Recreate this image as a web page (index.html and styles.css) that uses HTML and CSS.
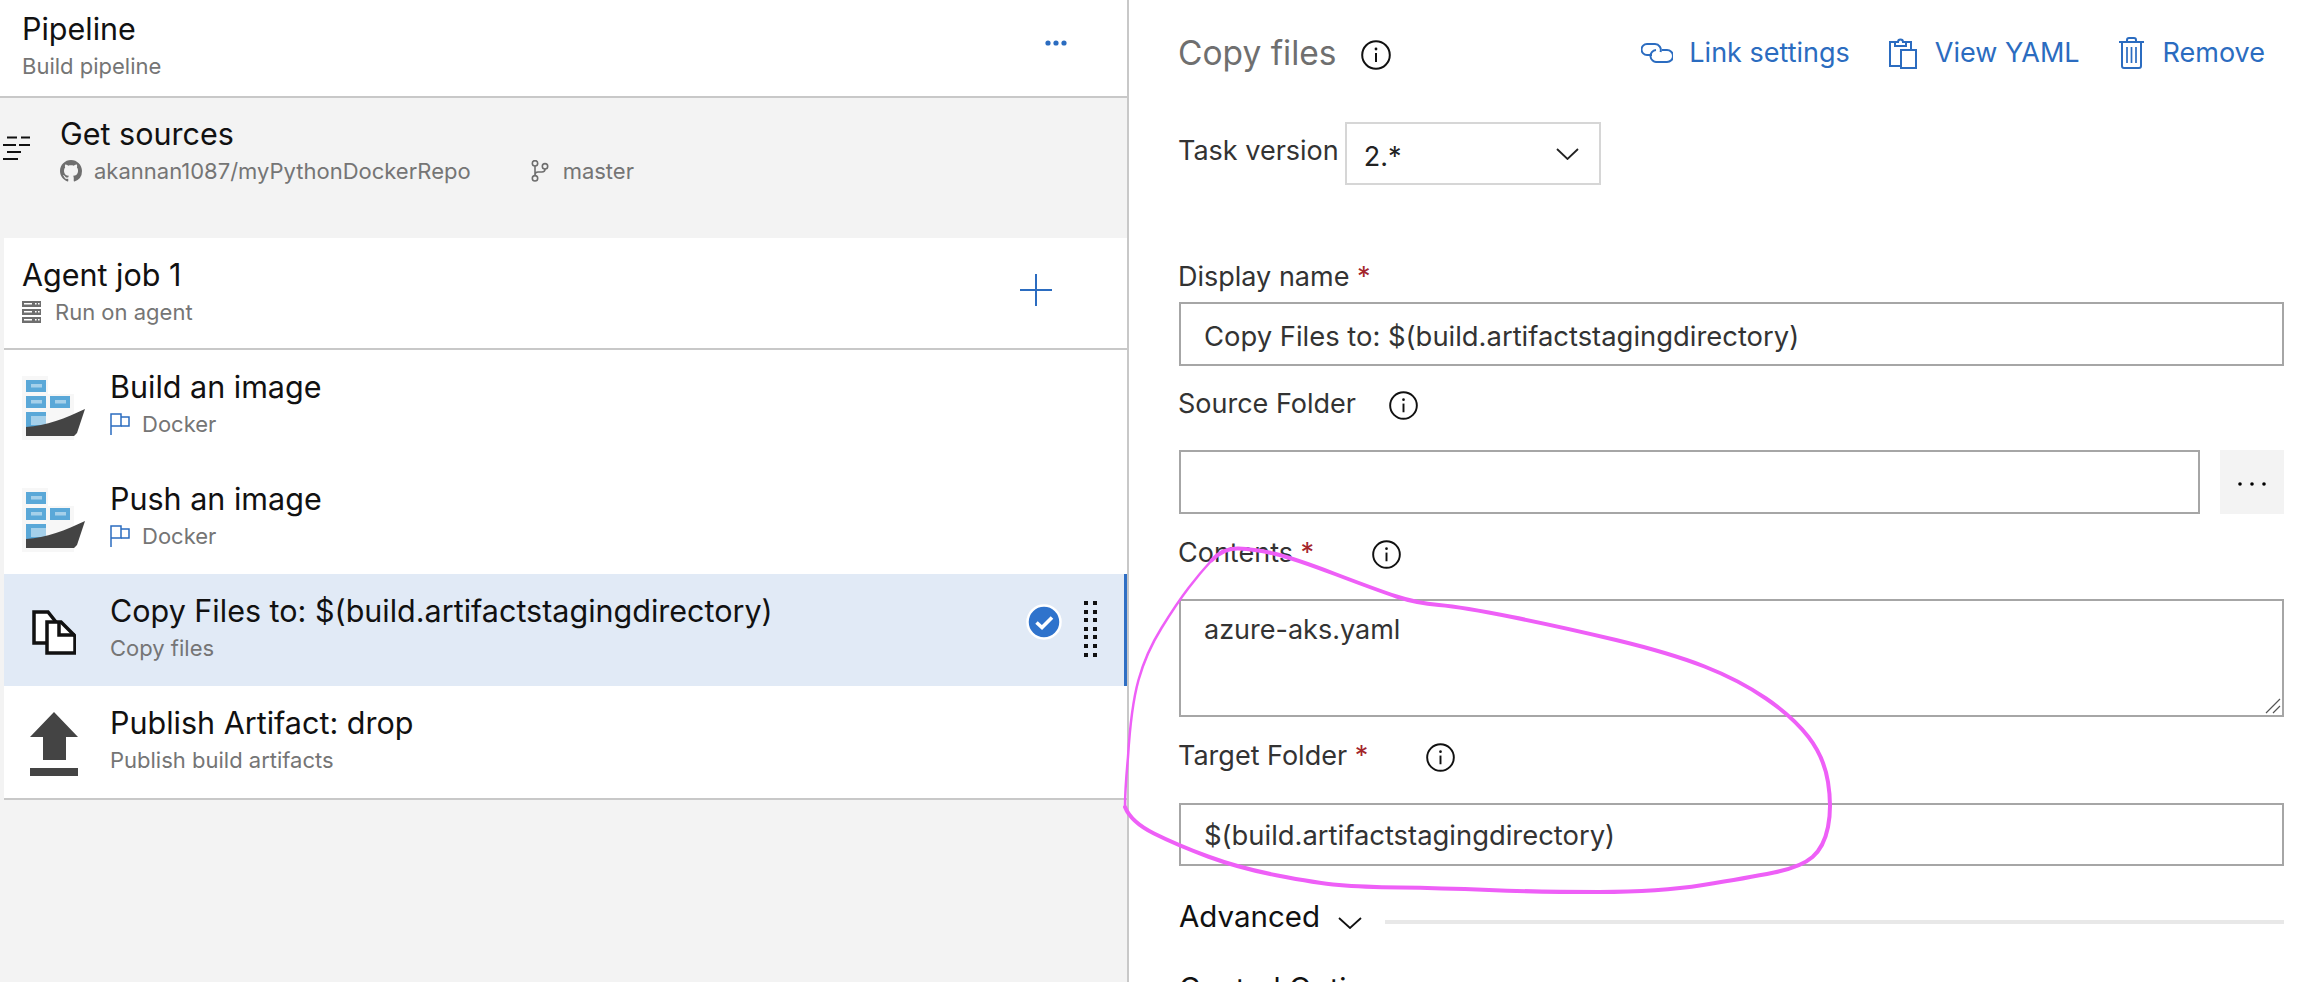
FILE: index.html
```html
<!DOCTYPE html>
<html lang="en">
<head>
    <meta charset="UTF-8">
    <title>Pipeline</title>
    <link rel="stylesheet" href="styles.css">
</head>
<body>
<div class="page">
    <div class="left">
        <div class="pipeline-head">
            <div>
                <div class="title">Pipeline</div>
                <div class="sub">Build pipeline</div>
            </div>
            <svg class="more" width="22" height="8" viewBox="0 0 22 8"><circle cx="3" cy="4" r="2.6"/><circle cx="11" cy="4" r="2.6"/><circle cx="19" cy="4" r="2.6"/></svg>
        </div>
        <div class="sources">
            <svg class="sources-icon" width="28" height="24" viewBox="0 0 28 24"><path d="M5 1.500h10M19 1.500h9M1 9h13M17 9h11M5 16h14M1 23h15" fill="none" stroke="#111" stroke-width="2"/></svg>
            <div>
                <div class="title">Get sources</div>
                <div class="sub source-meta">
                    <svg class="meta-icon" width="22" height="22" viewBox="0 0 16 16"><path fill="#6e6e6e" d="M8 0C3.58 0 0 3.58 0 8c0 3.54 2.29 6.53 5.47 7.59.4.07.55-.17.55-.38 0-.19-.01-.82-.01-1.49-2.01.37-2.53-.49-2.69-.94-.09-.23-.48-.94-.82-1.13-.28-.15-.68-.52-.01-.53.63-.01 1.08.58 1.23.82.72 1.21 1.87.87 2.33.66.07-.52.28-.87.51-1.07-1.78-.2-3.64-.89-3.64-3.95 0-.87.31-1.59.82-2.15-.08-.2-.36-1.02.08-2.12 0 0 .67-.21 2.2.82.64-.18 1.32-.27 2-.27s1.36.09 2 .27c1.53-1.04 2.2-.82 2.2-.82.44 1.1.16 1.92.08 2.12.51.56.82 1.27.82 2.15 0 3.07-1.87 3.75-3.65 3.95.29.25.54.73.54 1.48 0 1.07-.01 1.93-.01 2.2 0 .21.15.46.55.38A8.01 8.01 0 0 0 16 8c0-4.42-3.58-8-8-8z"/></svg>
                    <span class="repo">akannan1087/myPythonDockerRepo</span>
                    <svg class="meta-icon" width="18" height="22" viewBox="0 0 18 22"><g fill="none" stroke="#6e6e6e" stroke-width="1.6"><circle cx="4" cy="3.3" r="2.7"/><circle cx="4" cy="18.300" r="2.7"/><circle cx="14" cy="6.300" r="2.7"/><path d="M4 6v9.600M14 9c0 2-1 3-3 3H7c-2 0-3 1-3 3"/></g></svg>
                    <span class="branch">master</span>
                </div>
            </div>
        </div>
        <div class="job-list">
            <div class="job-head">
                <div>
                    <div class="title">Agent job 1</div>
                    <div class="sub job-meta">
                        <svg width="19" height="22" viewBox="0 0 19 22"><path fill="#6e6e6e" d="M0 0h19v6H0zM0 8h19v6H0zM0 16h19v6H0z"/><path fill="#fff" d="M2 2h8v1.600H2zM13 2h1.600v1.600H13zM16 2h1.600v1.600H16zM2 10h8v1.600H2zM13 10h1.600v1.600H13zM16 10h1.600v1.600H16zM2 18h8v1.600H2zM13 18h1.600v1.600H13zM16 18h1.600v1.600H16z"/></svg>
                        <span>Run on agent</span>
                    </div>
                </div>
                <svg class="plus" width="32" height="32" viewBox="0 0 32 32"><path d="M16 0v32M0 16h32" fill="none" stroke="#2b6cc0" stroke-width="2"/></svg>
            </div>
            <div class="task">
                <div class="task-icon">
                    <svg class="docker-icon" width="64" height="64" viewBox="0 0 64 64"><use href="#docker"/></svg>
                </div>
                <div>
                    <div class="title">Build an image</div>
                    <div class="sub task-sub">
                        <svg width="20" height="22" viewBox="0 0 20 22"><use href="#flag"/></svg>
                        <span>Docker</span>
                    </div>
                </div>
            </div>
            <div class="task">
                <div class="task-icon">
                    <svg class="docker-icon" width="64" height="64" viewBox="0 0 64 64"><use href="#docker"/></svg>
                </div>
                <div>
                    <div class="title">Push an image</div>
                    <div class="sub task-sub">
                        <svg width="20" height="22" viewBox="0 0 20 22"><use href="#flag"/></svg>
                        <span>Docker</span>
                    </div>
                </div>
            </div>
            <div class="task selected">
                <div class="task-icon">
                    <svg width="45" height="49" viewBox="0 0 45 49"><g fill="#fff" stroke="#111" stroke-width="3.5"><path d="M3 4H17L25 14V35H3z"/><path d="M16 14H30L44 28V45H16z"/></g><path d="M28 14V27H44" fill="none" stroke="#111" stroke-width="3.5"/></svg>
                </div>
                <div class="task-text">
                    <div class="title">Copy Files to: $(build.artifactstagingdirectory)</div>
                    <div class="sub">Copy files</div>
                </div>
                <svg class="check" width="36" height="36" viewBox="0 0 36 36"><circle cx="18" cy="18" r="16.500" fill="#2f73cc" stroke="#fff" stroke-width="2.500"/><path d="M10.500 18.500l5.500 5 10-10" fill="none" stroke="#fff" stroke-width="3.600"/></svg>
                <div class="grip">
                    <i></i><i></i><i></i><i></i><i></i><i></i><i></i><i></i><i></i><i></i><i></i><i></i><i></i><i></i>
                </div>
            </div>
            <div class="task">
                <div class="task-icon">
                    <svg width="48" height="64" viewBox="0 0 48 64"><path fill="#444" d="M24 0l24 25H36v23H13V25H0zM0 56h48v8H0z"/></svg>
                </div>
                <div>
                    <div class="title">Publish Artifact: drop</div>
                    <div class="sub">Publish build artifacts</div>
                </div>
            </div>
        </div>
    </div>

    <div class="right">
        <div class="panel-head">
            <span class="panel-title">Copy files</span>
            <svg class="big-info" width="30" height="30" viewBox="0 0 30 30"><use href="#info"/></svg>
            <div class="actions">
                <a class="action link-action">
                    <svg width="32" height="20" viewBox="0 0 32 20"><g fill="none" stroke="#2b6cc0" stroke-width="2"><path d="M11 12H6A5.500 5.500 0 0 1 6 1h8a6 6 0 0 1 5.500 8"/><path d="M21 7h5a6 6 0 0 1 0 12H16a6 6 0 0 1-1-12"/></g></svg>
                    Link settings
                </a>
                <a class="action yaml-action">
                    <svg width="28" height="31" viewBox="0 0 28 31"><g fill="none" stroke="#2b6cc0" stroke-width="2"><path d="M11 28H1V4h5M17 4h5v8"/><path d="M6 8V4h3a2.500 2.500 0 0 1 5 0h3v4z"/><path d="M12 12h15v18H12z"/></g></svg>
                    View YAML
                </a>
                <a class="action trash-action">
                    <svg width="25" height="32" viewBox="0 0 25 32"><g fill="none" stroke="#2b6cc0" stroke-width="2"><path d="M0 5h25M8 5V3a2 2 0 0 1 2-2h5a2 2 0 0 1 2 2v2M3 5v24a2 2 0 0 0 2 2h15a2 2 0 0 0 2-2V5"/></g><path d="M8 10v16M12.500 10v16M17 10v16" fill="none" stroke="#2b6cc0" stroke-width="1.700"/></svg>
                    Remove
                </a>
            </div>
        </div>

        <div class="version-row">
            <span class="field-label">Task version</span>
            <div class="version-select">
                <span class="version-value">2.*</span>
                <svg width="23" height="12" viewBox="0 0 23 12"><path d="M1 1l10.500 10L22 1" fill="none" stroke="#222" stroke-width="1.800"/></svg>
            </div>
        </div>

        <div class="field-label display-label">Display name <span class="req">*</span></div>
        <div class="text-box">Copy Files to: $(build.artifactstagingdirectory)</div>

        <div class="field-label source-label">Source Folder
            <svg class="label-info source-info" width="29" height="29" viewBox="0 0 30 30"><use href="#info"/></svg>
        </div>
        <div class="source-row">
            <div class="text-box grow"></div>
            <button class="dots-btn">
                <svg width="28" height="6" viewBox="0 0 28 6"><circle cx="2" cy="3" r="1.800"/><circle cx="14" cy="3" r="1.800"/><circle cx="26" cy="3" r="1.800"/></svg>
            </button>
        </div>

        <div class="field-label contents-label">Contents <span class="req">*</span>
            <svg class="label-info req-info" width="29" height="29" viewBox="0 0 30 30"><use href="#info"/></svg>
        </div>
        <div class="text-box area">
            azure-aks.yaml
            <svg class="resize" width="16" height="16" viewBox="0 0 16 16"><path d="M15 1L1 15M15 8l-7 7" fill="none" stroke="#555" stroke-width="1.200"/></svg>
        </div>

        <div class="field-label target-label">Target Folder <span class="req">*</span>
            <svg class="label-info req-info" width="29" height="29" viewBox="0 0 30 30"><use href="#info"/></svg>
        </div>
        <div class="text-box target-box">$(build.artifactstagingdirectory)</div>

        <div class="section-head">
            <span>Advanced</span>
            <svg width="24" height="12" viewBox="0 0 24 12"><path d="M1 1l11 10L23 1" fill="none" stroke="#111" stroke-width="1.800"/></svg>
            <div class="section-line"></div>
        </div>
        <div class="section-head control">Control Options</div>
    </div>
</div>

<!-- marker scribbled on the screenshot -->
<svg class="scribble" width="2308" height="982" viewBox="0 0 2308 982">
    <path class="thick" d="M1125 807Q1131 822 1154 833.500Q1177 845 1208 856.500Q1239 868 1277.500 875.500Q1316 883 1339 885Q1362 887 1400 887.500Q1439 888 1489 890Q1539 892 1599 892Q1659 892 1703 885Q1747 878 1774 872.500Q1801 867 1812.500 857Q1824 847 1828 827Q1832 807 1828 782Q1824 757 1808.500 737Q1793 717 1766 698.500Q1739 680 1704.500 666.500Q1670 653 1616 640Q1562 627 1512 617Q1462 607 1439 605Q1416 603 1396.500 596.500Q1377 590 1335 574Q1293 558 1273.500 553.500Q1254 549 1238.500 548.500Q1223 548 1211.500 560.500"/>
    <path class="thin" d="M1211.500 560.500Q1200 573 1188.500 588Q1177 603 1161.500 628Q1146 653 1138.500 680Q1131 707 1128 757Q1125 790 1125 807"/>
</svg>

<svg class="defs" width="0" height="0">
    <defs>
        <g id="docker">
            <path d="M0 0h26v18h26v46H0z" fill="#f7f7f7"/>
            <rect x="4" y="4" width="20" height="12" fill="#5aa8d8"/><rect x="9" y="8" width="11" height="3.500" fill="#a5d0ea"/>
            <rect x="4" y="20" width="20" height="12" fill="#5aa8d8"/><rect x="9" y="24" width="11" height="3.500" fill="#a5d0ea"/>
            <rect x="28" y="20" width="20" height="12" fill="#5aa8d8"/><rect x="33" y="24" width="11" height="3.500" fill="#a5d0ea"/>
            <rect x="4" y="36" width="20" height="15" fill="#5aa8d8"/><rect x="9" y="40" width="15" height="9" fill="#a5d0ea"/>
            <path d="M4 60V51C24 50 44 42 63 33L55 57 52 60z" fill="#444"/>
        </g>
        <g id="flag" fill="none" stroke="#2b6cc0" stroke-width="1.500">
            <path d="M1 22V1h10v12H1"/>
            <path d="M11 4h8v9h-8"/>
        </g>
        <g id="info">
            <circle cx="15" cy="15" r="13.800" fill="none" stroke="#111" stroke-width="2"/>
            <path d="M15 13v9" stroke="#111" stroke-width="2"/>
            <circle cx="15" cy="9" r="1.400" fill="#111"/>
        </g>
    </defs>
</svg>
</body>
</html>
```
FILE: styles.css
```css
html, body {
    margin: 0;
    padding: 0;
    height: 982px;
    overflow: hidden;
    background: #fff;
}
body {
    font-family: Inter, "Noto Sans", sans-serif;
    color: #111;
    position: relative;
}
.page {
    display: flex;
    height: 982px;
    overflow: hidden;
}
.left {
    width: 1127px;
    flex: none;
    background: #f3f3f3;
    border-right: 2px solid #c8c8c8;
}
.right {
    flex: 1;
    padding: 0 24px 0 50px;
    min-width: 0;
}
.title {
    font-size: 30.5px;
    line-height: 34px;
    color: #111;
}
.sub {
    font-size: 22px;
    line-height: 34px;
    margin-top: 3px;
    color: #757575;
}

/* left side */
.pipeline-head {
    height: 96px;
    box-sizing: border-box;
    background: #fff;
    padding: 12px 60px 0 22px;
    display: flex;
    justify-content: space-between;
}
.more {
    fill: #2b6cc0;
    margin-top: 27px;
}
.sources {
    border-top: 2px solid #c8c8c8;
    height: 142px;
    box-sizing: border-box;
    padding: 19px 0 0 2px;
    display: flex;
}
.sources-icon {
    margin: 19px 30px 0 0;
}
.source-meta {
    display: flex;
    align-items: center;
}
.repo {
    margin: 0 60px 0 12px;
}
.branch {
    margin-left: 14px;
}
.job-list {
    margin-left: 4px;
    background: #fff;
    border-bottom: 2px solid #c8c8c8;
}
.job-head {
    height: 112px;
    box-sizing: border-box;
    border-bottom: 2px solid #c8c8c8;
    padding: 20px 75px 0 18px;
    display: flex;
    justify-content: space-between;
}
.job-meta {
    display: flex;
    align-items: center;
}
.job-meta svg {
    margin-right: 14px;
}
.plus {
    margin-top: 16px;
}
.task {
    height: 112px;
    box-sizing: border-box;
    padding: 20px 27px 0 0;
    display: flex;
}
.task-icon {
    width: 99px;
    height: 64px;
    margin: 6px 7px 0 0;
    flex: none;
    display: flex;
    justify-content: center;
    align-items: center;
}
.docker-icon {
    filter: blur(0.5px);
}
.task-text {
    flex: 1;
}
.task-sub {
    display: flex;
    align-items: center;
}
.task-sub svg {
    margin-right: 12px;
}
.selected {
    background: #e1eaf6;
    border-right: 3px solid #2f6fc4;
}
.check {
    margin: 10px 22px 0 0;
}
.grip {
    display: grid;
    grid-template-columns: 4px 4px;
    column-gap: 5px;
    row-gap: 4.600px;
    grid-auto-rows: 4px;
    margin-top: 7px;
}
.grip i {
    display: block;
    background: #111;
}

/* right side */
.panel-head {
    height: 122px;
    box-sizing: border-box;
    padding-top: 34px;
    display: flex;
    align-items: flex-start;
}
.panel-title {
    font-size: 33.5px;
    line-height: 38px;
    color: #6f6f6f;
    margin-left: -1px;
}
.big-info {
    margin: 6px 0 0 24px;
}
.actions {
    margin: 0 19px 0 auto;
    display: flex;
    gap: 39px;
}
.action {
    display: flex;
    align-items: center;
    font-size: 27px;
    line-height: 38px;
    color: #2b6cc0;
}
.link-action {
    gap: 16px;
}
.yaml-action {
    gap: 18px;
}
.trash-action {
    gap: 19px;
}
.version-row {
    display: flex;
    height: 63px;
}
.field-label {
    font-size: 27px;
    line-height: 34px;
    color: #333;
    margin-left: -1px;
}
.version-row .field-label {
    margin-top: 12px;
}
.version-select {
    margin-left: 6px;
    width: 256px;
    height: 63px;
    box-sizing: border-box;
    border: 2px solid #d6d6d6;
    padding: 0 20px 0 17px;
    display: flex;
    justify-content: space-between;
    align-items: center;
    font-size: 27px;
    color: #222;
}
.version-value {
    margin-top: 5px;
}
.req {
    color: #a4262c;
}
.label-info {
    vertical-align: middle;
}
.display-label {
    margin-top: 75px;
    height: 42px;
}
.text-box {
    height: 64px;
    box-sizing: border-box;
    border: 2px solid #a6a6a6;
    padding: 4px 23px 0;
    display: flex;
    align-items: center;
    font-size: 27.4px;
    color: #333;
    background: #fff;
}
.source-label {
    margin-top: 21px;
    height: 63px;
}
.source-info {
    margin-left: 25px;
}
.source-row {
    display: flex;
    gap: 20px;
}
.grow {
    flex: 1;
}
.dots-btn {
    width: 64px;
    height: 64px;
    border: 0;
    padding: 0;
    background: #f3f3f3;
}
.contents-label {
    margin-top: 22px;
    height: 63px;
}
.req-info {
    margin-left: 50px;
}
.area {
    height: 118px;
    align-items: flex-start;
    padding-top: 12px;
    font-size: 27px;
    position: relative;
}
.resize {
    position: absolute;
    right: 1px;
    bottom: 1px;
}
.target-label {
    margin-top: 22px;
    height: 64px;
}
.target-box {
    height: 63px;
    padding-top: 0;
}
.section-head {
    margin-top: 31px;
    display: flex;
    align-items: center;
    font-size: 29.5px;
    line-height: 38px;
    color: #111;
}
.section-head svg {
    margin: 13px 0 0 18px;
}
.section-line {
    flex: 1;
    height: 4px;
    margin: 12px 0 0 23px;
    background: #e8e8e8;
}
.control {
    margin-top: 34px;
}

.scribble {
    position: absolute;
    top: 0;
    left: 0;
    pointer-events: none;
}
.scribble path {
    fill: none;
    stroke: #ee5ff7;
    stroke-linecap: round;
}
.scribble .thick {
    stroke-width: 4;
}
.scribble .thin {
    stroke-width: 2.5;
}
.defs {
    position: absolute;
}
```
